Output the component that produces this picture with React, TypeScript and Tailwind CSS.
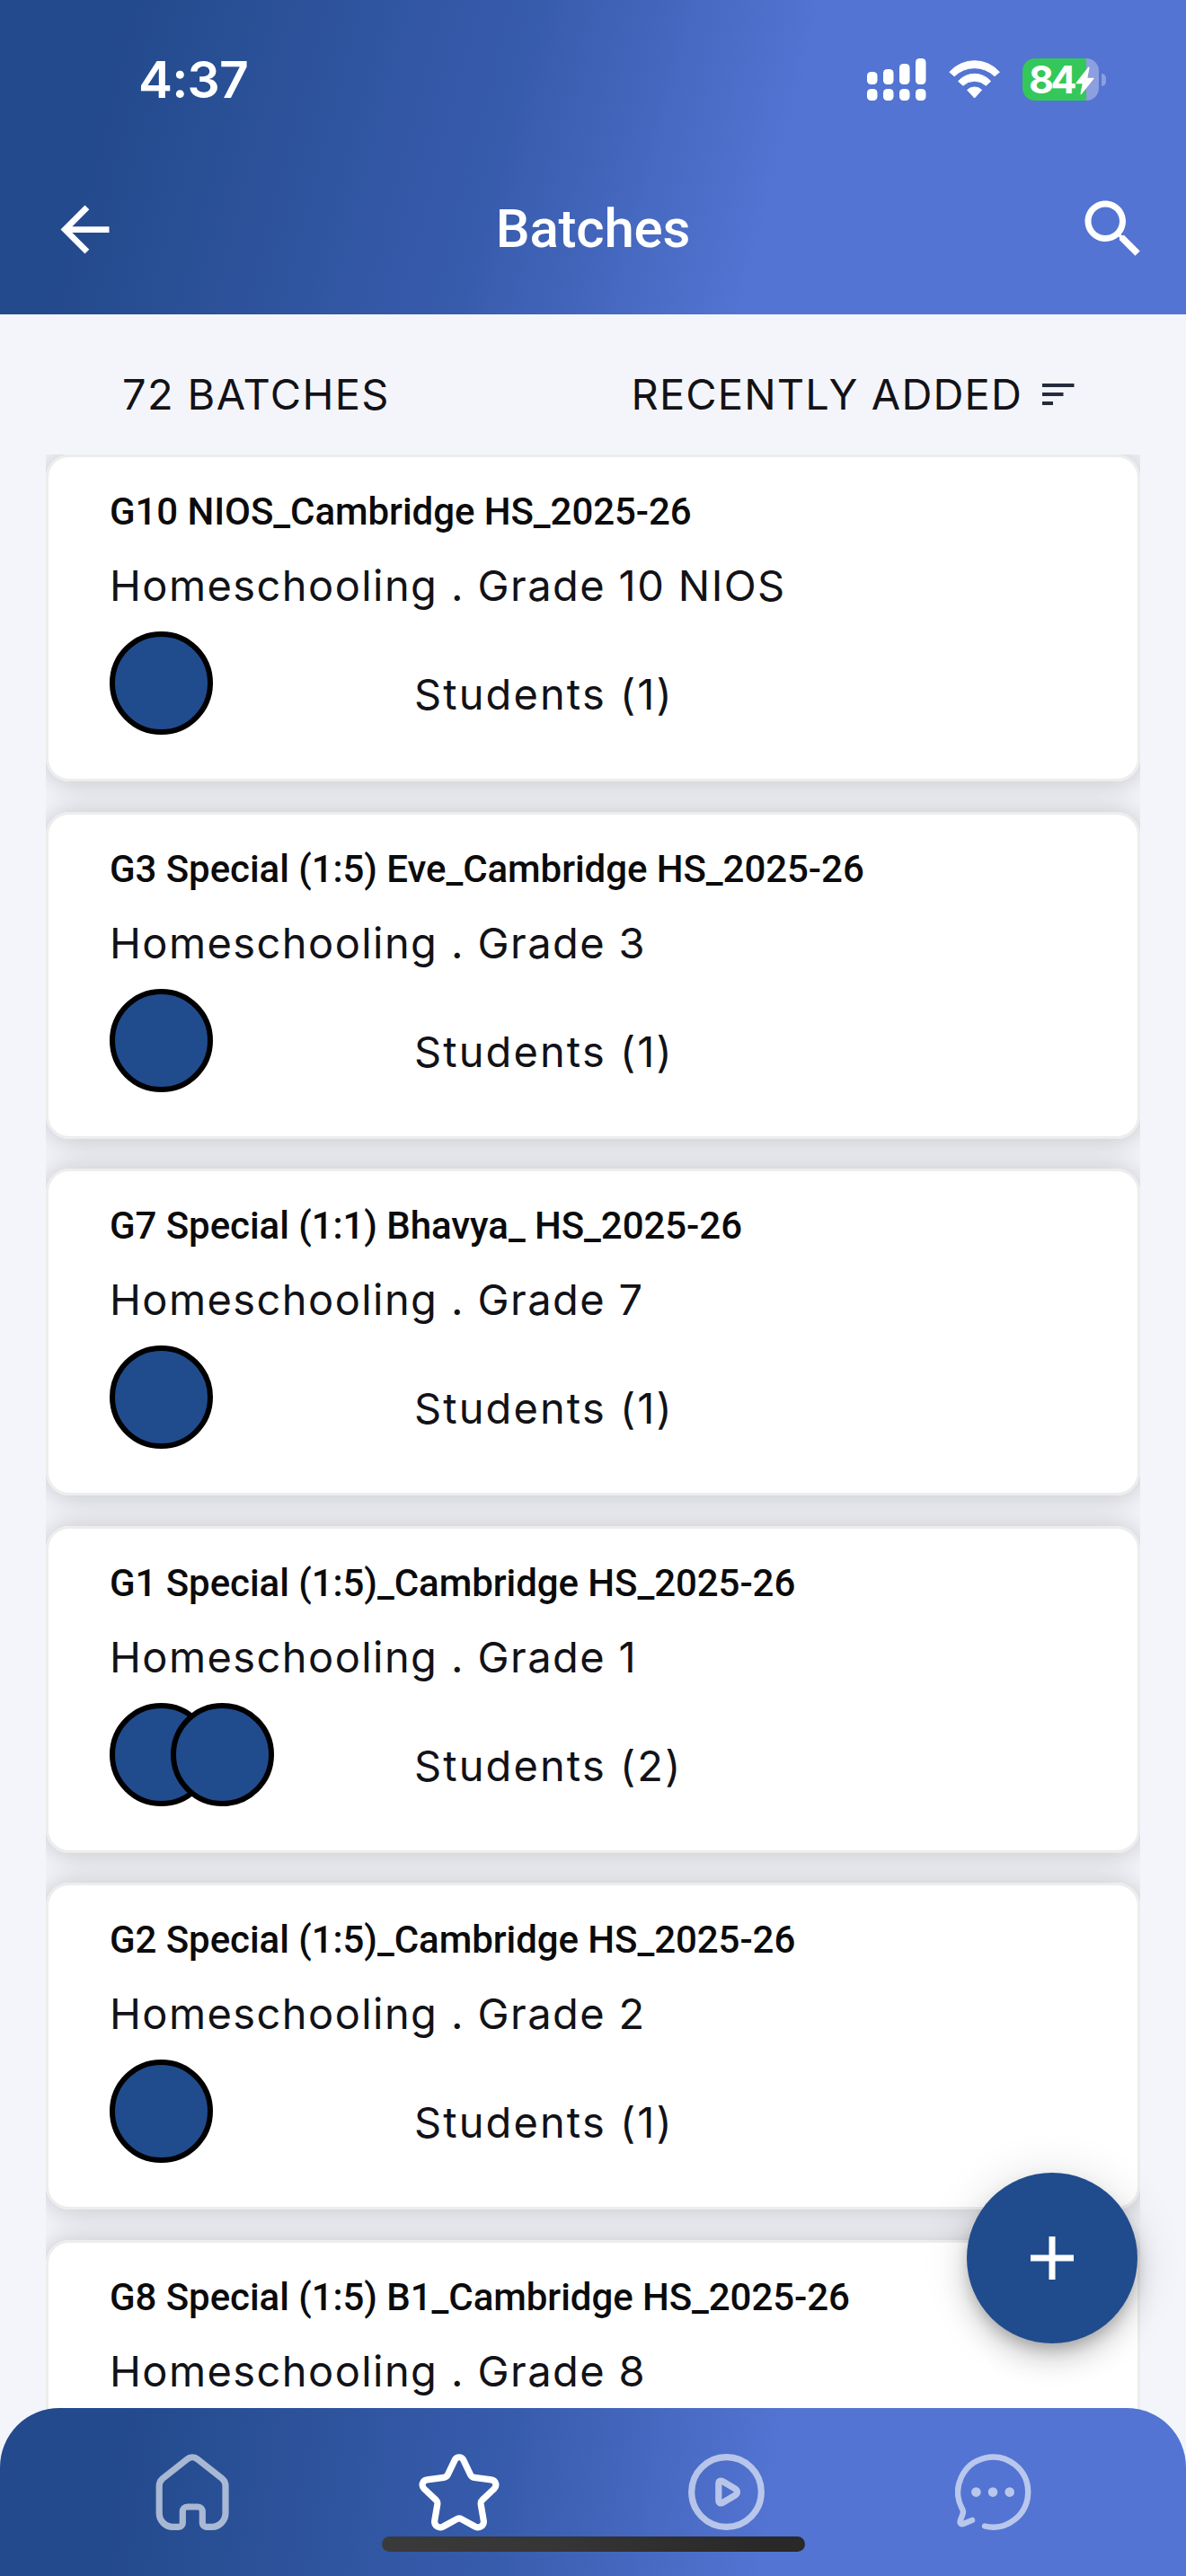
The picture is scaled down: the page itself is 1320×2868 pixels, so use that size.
import React from 'react';

interface Batch {
    id: number;
    name: string;
    course: string;
    students: number;
}

const batches: Batch[] = [
    { id: 1, name: 'G10 NIOS_Cambridge HS_2025-26', course: 'Homeschooling . Grade 10 NIOS', students: 1 },
    { id: 2, name: 'G3 Special (1:5) Eve_Cambridge HS_2025-26', course: 'Homeschooling . Grade 3', students: 1 },
    { id: 3, name: 'G7 Special (1:1) Bhavya_ HS_2025-26', course: 'Homeschooling . Grade 7', students: 1 },
    { id: 4, name: 'G1 Special (1:5)_Cambridge HS_2025-26', course: 'Homeschooling . Grade 1', students: 2 },
    { id: 5, name: 'G2 Special (1:5)_Cambridge HS_2025-26', course: 'Homeschooling . Grade 2', students: 1 },
    { id: 6, name: 'G8 Special (1:5) B1_Cambridge HS_2025-26', course: 'Homeschooling . Grade 8', students: 1 },
];

const SignalIcon = () => (
    <svg width="66" height="47" viewBox="0 0 66 47" fill="#fff">
        <rect x="0" y="15" width="11.5" height="14" rx="4.5" />
        <rect x="18" y="12" width="11.5" height="17" rx="4.5" />
        <rect x="36" y="6" width="11.5" height="23" rx="4.5" />
        <rect x="54" y="0" width="11.5" height="29" rx="4.5" />
        {[0, 18, 36, 54].map(x => <rect key={x} x={x} y="34" width="11.5" height="13" rx="4.5" />)}
    </svg>
);

const WifiIcon = () => (
    <svg width="57" height="43" viewBox="0 0 57 43" fill="#fff" stroke="#fff" strokeWidth="1" strokeLinejoin="round">
        <path d="M0.8 13.3A37 37 0 0 1 56.4 13.3L51 17.8A32 32 0 0 0 6.2 17.8Z" />
        <path d="M10.6 23.4A24 24 0 0 1 46.6 23.4L41.3 28.2A18.6 18.6 0 0 0 15.9 28.2Z" />
        <path d="M20.6 33.2A11.5 11.5 0 0 1 36.6 33.2L28.6 42Z" />
    </svg>
);

const Battery = () => (
    <div className="flex items-center gap-[3px]">
        <div className="relative flex h-[47px] w-[85px] items-center rounded-[14px] bg-[linear-gradient(90deg,#34c759_71px,#8c9fdf_71px)] pl-[7px]">
            <span className="text-[43px] leading-[47px] font-bold tracking-[-3.4px] text-white">84</span>
            <svg className="absolute inset-0" width="85" height="47" viewBox="0 0 85 47" fill="#fff" stroke="#fff" strokeWidth="1.5" strokeLinejoin="round">
                <path d="M73.8 10.2L60.3 27.5H67.6L65.2 39.4L78.8 22.4H71.5Z" />
            </svg>
        </div>
        <div className="h-[14px] w-[5px] rounded-r-full bg-[#8c9fdf]" />
    </div>
);

const BackIcon = () => (
    <svg width="81" height="81" viewBox="0 0 24 24" fill="#fff">
        <path d="M20 11H7.83l5.59-5.59L12 4l-8 8 8 8 1.41-1.41L7.83 13H20v-2z" />
    </svg>
);

const SearchIcon = () => (
    <svg width="84" height="84" viewBox="0 0 24 24" fill="#fff">
        <path d="M15.5 14h-.79l-.28-.27C15.41 12.59 16 11.11 16 9.5 16 5.91 13.09 3 9.5 3S3 5.91 3 9.5 5.91 16 9.5 16c1.61 0 3.09-.59 4.23-1.57l.27.28v.79l5 4.99L20.49 19l-4.99-5zm-6 0C7.01 14 5 11.99 5 9.5S7.01 5 9.5 5 14 7.01 14 9.5 11.99 14 9.5 14z" />
    </svg>
);

const SortIcon = () => (
    <svg width="36" height="24" viewBox="0 0 36 24" fill="#252c3a">
        <rect x="0" y="0" width="35.5" height="4" />
        <rect x="0" y="10" width="23.5" height="4" />
        <rect x="0" y="20" width="12" height="4" />
    </svg>
);

const TabIcon: React.FC<{ active?: boolean; strokeWidth?: number; children: React.ReactNode }> = ({ active, strokeWidth = 7.2, children }) => (
    <svg
        width="96"
        height="96"
        viewBox="0 0 96 96"
        fill="none"
        stroke="#fff"
        strokeWidth={strokeWidth}
        strokeLinecap="round"
        strokeLinejoin="round"
        className={active ? '' : 'opacity-60'}
    >
        {children}
    </svg>
);

const BatchCard: React.FC<{ batch: Batch }> = ({ batch }) => (
    <div className="relative h-[364px] shrink-0 rounded-[26px] border-[3px] border-[#ededed] bg-white pt-[36px] pl-[68px] before:absolute before:-inset-[3px] before:-z-10 before:rounded-[26px] before:shadow-[0_1px_32px_rgba(0,0,0,0.22)] before:content-['']">
        <h2 className="font-['Roboto'] text-[42px] leading-[50px] font-medium tracking-[-0.06px] text-[#0b0b0c]">{batch.name}</h2>
        <p className="mt-[29px] text-[47px] leading-[56px] tracking-[1.42px]">{batch.course}</p>
        <div className="mt-[23px] flex h-[115px] items-start">
            <div className="flex w-[339px]">
                {Array.from({ length: batch.students }, (_, i) => (
                    <div key={i} className="-mr-[47px] size-[115px] rounded-full border-[6px] border-black bg-[#204c8d]" />
                ))}
            </div>
            <p className="mt-[42px] text-[47px] leading-[56px] tracking-[2.1px]">Students ({batch.students})</p>
        </div>
    </div>
);

export default function App() {
    return (
        <div className="relative flex h-[2868px] w-[1320px] flex-col overflow-hidden bg-[#f4f5fa] font-['Inter',sans-serif] text-[#121217]">
            <header className="h-[350px] shrink-0 bg-[linear-gradient(104.85deg,#234a8c_10%,#385cad_43%,#5374d2_65%)] text-white">
                <div className="flex h-[177px] items-center justify-between pr-[89px] pl-[154px]">
                    <span className="text-[57px] leading-none font-semibold tracking-[-0.8px]">4:37</span>
                    <div className="flex items-center gap-[25px]">
                        <SignalIcon />
                        <WifiIcon />
                        <Battery />
                    </div>
                </div>
                <div className="grid h-[156px] grid-cols-[1fr_auto_1fr] items-center px-[39px]">
                    <button className="ml-[15px] justify-self-start"><BackIcon /></button>
                    <h1 className="font-['Roboto'] text-[60px] leading-[70px] font-medium tracking-[-0.2px]">Batches</h1>
                    <button className="justify-self-end"><SearchIcon /></button>
                </div>
            </header>

            <div className="flex h-[156px] shrink-0 items-center justify-between pt-[21px] pr-[124px] pl-[136px] text-[47px] leading-[56px]">
                <span className="tracking-[1.35px]">72 BATCHES</span>
                <div className="flex items-center gap-[22px]">
                    <span className="tracking-[1.15px]">RECENTLY ADDED</span>
                    <SortIcon />
                </div>
            </div>

            <main className="isolate mx-[51px] flex min-h-0 flex-1 flex-col gap-[33.6px] overflow-hidden">
                {batches.map(b => <BatchCard key={b.id} batch={b} />)}
            </main>

            {/* Add batch button */}
            <button className="absolute right-[54px] bottom-[259px] flex size-[190px] items-center justify-center rounded-full bg-[#204c8d] shadow-[0_9px_15px_-3px_rgba(0,0,0,0.2),0_18px_30px_rgba(0,0,0,0.14),0_3px_54px_rgba(0,0,0,0.12)]">
                <svg width="48" height="48" viewBox="0 0 48 48" stroke="#fff" strokeWidth="7">
                    <path d="M24 0V48M0 24H48" />
                </svg>
            </button>

            {/* Bottom tabs */}
            <nav className="absolute inset-x-0 bottom-0 grid h-[187px] grid-cols-4 justify-items-center rounded-t-[66px] bg-[linear-gradient(98.1deg,#234a8c_10%,#385cad_43%,#5374d2_65%)] pt-[45px] pr-[67px] pl-[65px]">
                <TabIcon>
                    <path d="M42 12.2C45.5 9.2 50.7 9.2 54.2 12.2L81.5 33.8C83.7 35.8 85 38.7 85 41.7V72C85 80.5 78 87.3 69.7 87.3H63.5C61.2 87.3 59.3 85.4 59.3 83.1V70C59.3 67.2 57.1 65 54.3 65H42.3C39.5 65 37.3 67.2 37.3 70V83.1C37.3 85.4 35.4 87.3 33.1 87.3H26.5C18 87.3 11.2 80.5 11.2 72V41.7C11.2 38.7 12.5 35.8 14.7 33.8Z" />
                </TabIcon>
                <TabIcon active>
                    <path d="M43.3 12.6C45.2 8.8 50.8 8.8 52.7 12.6L60.6 29.2Q62 32 65 32.4L83.7 34.9C88.9 35.7 90.6 41.3 86.9 45L74 57.2Q71.8 59.3 72.2 62.3L75.3 80.5C76 86 70.4 89.3 65.8 87L51 78.8Q48 77.1 45 78.8L30.2 87C25.6 89.3 20 86 20.7 80.5L23.8 62.3Q24.2 59.3 22 57.2L9.1 45C5.4 41.3 7.1 35.7 12.3 34.9L31 32.4Q34 32 35.4 29.2Z" />
                </TabIcon>
                <TabIcon>
                    <circle cx="48.5" cy="48.5" r="38.8" />
                    <path d="M39.8 39.5C39.8 36.2 41.8 35.2 44.8 36.9L57.8 44.6C61.3 46.8 61.3 50.2 57.8 52.4L44.8 60.1C41.8 61.8 39.8 60.8 39.8 57.5Z" />
                </TabIcon>
                <TabIcon strokeWidth={6.4}>
                    <path d="M39 86.5A39 39 0 1 0 13.3 66Q15.8 69.8 14.5 73L11.9 80.2C10.8 83.6 12.4 85 15.6 83.8L25 79.9" />
                    <g fill="#fff" stroke="none">
                        <circle cx="29.4" cy="48.6" r="5.3" />
                        <circle cx="48" cy="48.6" r="5.3" />
                        <circle cx="66.7" cy="48.6" r="5.3" />
                    </g>
                </TabIcon>
            </nav>

            {/* System home indicator */}
            <div className="absolute bottom-[27px] left-[425px] h-[17px] w-[471px] rounded-full bg-[linear-gradient(90deg,#3a3a3a,#363636_40%,#292929_90%)]" />
        </div>
    );
}
